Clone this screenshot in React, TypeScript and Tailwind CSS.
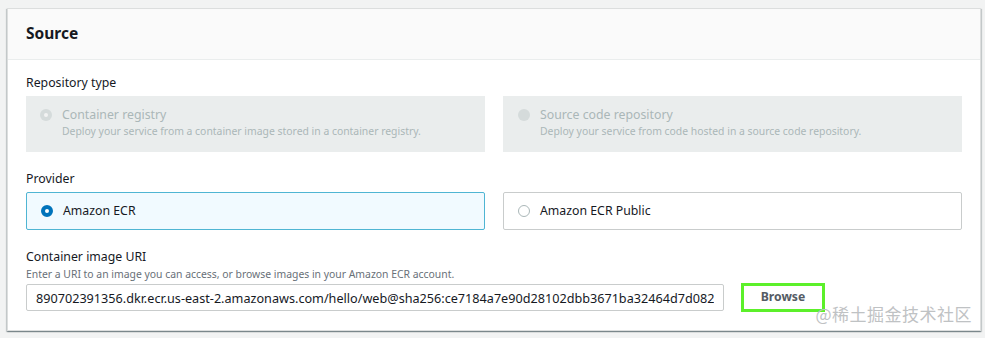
export default function App() {
  return (
    <div className="min-h-screen w-[985px] h-[338px] bg-[#f2f3f3] pt-[8px] pl-[7px] font-['Noto_Sans','Open_Sans',sans-serif] text-[#16191f] overflow-hidden">
      <div className="relative w-[974px] bg-white border border-[#dcdede] shadow-[0_1px_1px_0_rgba(0,28,36,0.3),1px_1px_1px_0_rgba(0,28,36,0.15),-1px_1px_1px_0_rgba(0,28,36,0.15)]">
        <div className="h-[51px] bg-[#fafafa] border-b border-[#eaeded] px-[18px] flex items-center">
          <h2 className="text-[15.5px] font-bold leading-[22px] -mt-[3px]">Source</h2>
        </div>

        <div className="px-[18px] pt-[13px] pb-[18px]">
          <div className="text-[12.3px] leading-[20px] text-[#16191f]">Repository type</div>
          <div className="mt-[3px] grid grid-cols-2 gap-[18px]">
            <div className="h-[56px] bg-[#eaeded] flex pl-[14px] pt-[9px]">
              <span className="mt-[4px] w-[12px] h-[12px] rounded-full bg-[#d5dbdb] flex items-center justify-center">
                <span className="w-[4px] h-[4px] rounded-full bg-[#f2f3f3]"></span>
              </span>
              <div className="ml-[10px]">
                <div className="text-[12.3px] leading-[19px] text-[#aab7b8]">Container registry</div>
                <div className="text-[10.4px] leading-[14px] text-[#aab7b8]">Deploy your service from a container image stored in a container registry.</div>
              </div>
            </div>
            <div className="h-[56px] bg-[#eaeded] flex pl-[15px] pt-[9px]">
              <span className="mt-[4px] w-[12px] h-[12px] rounded-full bg-[#d5dbdb]"></span>
              <div className="ml-[10px]">
                <div className="text-[12.3px] leading-[19px] text-[#aab7b8]">Source code repository</div>
                <div className="text-[10.4px] leading-[14px] text-[#aab7b8]">Deploy your service from code hosted in a source code repository.</div>
              </div>
            </div>
          </div>

          <div className="mt-[17px] text-[12.3px] leading-[20px]">Provider</div>
          <div className="mt-[3px] grid grid-cols-2 gap-[18px]">
            <div className="h-[38px] bg-[#f1faff] border border-[#4fb5d3] rounded-[2px] flex items-center pl-[14px]">
              <span className="w-[12px] h-[12px] rounded-full border-[4px] border-[#0073bb] bg-white"></span>
              <span className="ml-[10px] text-[12.3px] leading-[20px]">Amazon ECR</span>
            </div>
            <div className="h-[38px] bg-white border border-[#c9cccc] rounded-[2px] flex items-center pl-[14px]">
              <span className="w-[12px] h-[12px] rounded-full border border-[#aab7b8] bg-white"></span>
              <span className="ml-[10px] text-[12.3px] leading-[20px]">Amazon ECR Public</span>
            </div>
          </div>

          <div className="mt-[17px] text-[12.3px] leading-[20px]">Container image URI</div>
          <div className="text-[10.4px] leading-[15px] text-[#687078]">Enter a URI to an image you can access, or browse images in your Amazon ECR account.</div>
          <div className="mt-[1px] flex items-center">
            <div className="w-[698px] h-[27px] border border-[#c9cccc] rounded-[2px] bg-white pl-[9px] pr-[9px] flex items-center">
              <div className="overflow-hidden whitespace-nowrap text-[12.65px] leading-[20px] text-[#16191f]">890702391356.dkr.ecr.us-east-2.amazonaws.com/hello/web@sha256:ce7184a7e90d28102dbb3671ba32464d7d082676e</div>
            </div>
            <button className="ml-[17px] w-[84px] h-[29px] border-[3px] border-[#5cf02a] bg-white text-[12.2px] font-bold text-[#545b64] flex items-center justify-center">
              Browse
            </button>
          </div>
        </div>

        <div className="absolute right-[8px] bottom-[5px] text-[17px] leading-[22px] text-[#bfc2c4] font-['Noto_Sans_CJK_SC',sans-serif] tracking-[0.5px]">@稀土掘金技术社区</div>
      </div>
    </div>
  );
}
